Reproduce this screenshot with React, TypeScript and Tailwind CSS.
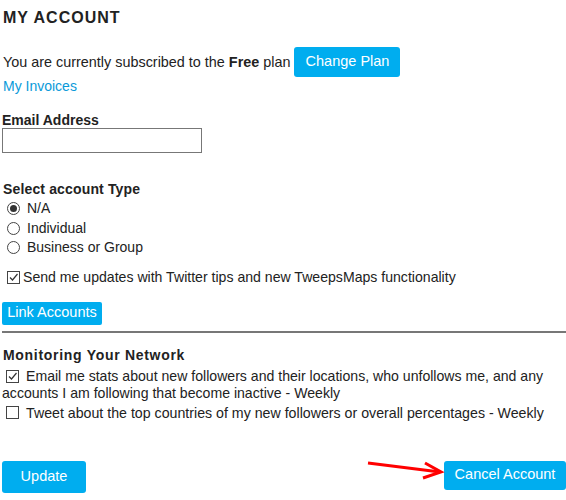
export default function App() {
  return (
    <div className="relative w-[566px] h-[500px] bg-white pl-[2px] text-[14px] text-[#222] font-['Liberation_Sans',Arial,sans-serif]">
      <h1 className="pt-[9px] pl-[1px] text-[16px] leading-[18px] font-bold tracking-[1px]">MY ACCOUNT</h1>

      <div className="mt-[20px] flex items-center gap-[4px] pl-[1px]">
        <span className="text-[14.4px] leading-[18px]">
          You are currently subscribed to the <b>Free</b> plan
        </span>
        <button className="h-[30px] w-[106px] rounded-[3px] bg-[#00adef] text-[14.5px] text-white">Change Plan</button>
      </div>
      <a className="block pl-[1px] leading-[18px] text-[#0a9ad9]" href="#">My Invoices</a>

      <label className="mt-[17px] block leading-[16px] font-bold">Email Address</label>
      <input className="block h-[25px] w-[200px] border border-[#777] bg-white" />

      <div className="mt-[27px] pl-[1px] leading-[18px] font-bold tracking-[0.15px]">Select account Type</div>
      <div className="mt-[1px] flex flex-col">
        {['N/A', 'Individual', 'Business or Group'].map((t, i) => (
          <label key={t} className="flex h-[19.5px] items-center">
            <span className="ml-[5px] mr-[7px] flex h-[13px] w-[13px] items-center justify-center rounded-full border border-[#444] bg-white">
              {i === 0 && <span className="h-[7px] w-[7px] rounded-full bg-[#333]" />}
            </span>
            {t}
          </label>
        ))}
      </div>

      <label className="mt-[11px] flex h-[18px] items-center text-[14.1px]">
        <Check on className="ml-[5px] mr-[3px]" />
        Send me updates with Twitter tips and new TweepsMaps functionality
      </label>

      <button className="mt-[15px] block h-[23px] w-[100px] rounded-[2px] bg-[#00adef] text-[14.5px] text-white">Link Accounts</button>

      <hr className="mt-[6px] border-0 border-t-2 border-[#777]" />

      <div className="mt-[13px] pl-[1px] leading-[18px] font-bold tracking-[0.7px]">Monitoring Your Network</div>
      <p className="mt-[4px] pr-[8px] text-[14.1px] leading-[17px]">
        <Check on className="ml-[4px] mr-[7px] inline-flex align-[-1px]" />
        Email me stats about new followers and their locations, who unfollows me, and any accounts I am following that become inactive - Weekly
      </p>
      <p className="mt-[3px] text-[14.2px] leading-[17px]">
        <Check className="ml-[4px] mr-[7px] inline-flex align-[-1px]" />
        Tweet about the top countries of my new followers or overall percentages - Weekly
      </p>

      <div className="mt-[39px] flex items-start justify-between">
        <button className="h-[32px] w-[84px] rounded-[3px] bg-[#00adef] text-[14.5px] text-white">Update</button>
        <button className="h-[29px] w-[122px] rounded-[3px] bg-[#00adef] text-[14.5px] text-white">Cancel Account</button>
      </div>

      <svg className="absolute left-[360px] top-[455px]" width="90" height="32" viewBox="0 0 90 32">
        <path d="M8 8 L80 17" stroke="#f00" strokeWidth="3" fill="none" />
        <path d="M65 8 L81 17 L63 23" stroke="#f00" strokeWidth="3" fill="none" />
      </svg>
    </div>
  );
}

function Check({ on, className = '' }: { on?: boolean; className?: string }) {
  return (
    <span className={`h-[13px] w-[13px] items-center justify-center border border-[#444] bg-white ${className} ${className.includes('inline-flex') ? '' : 'flex'}`}>
      {on && (
        <svg width="11" height="11" viewBox="0 0 11 11">
          <path d="M2 5.5 L4.5 8 L9.5 2" stroke="#333" strokeWidth="1.2" fill="none" />
        </svg>
      )}
    </span>
  );
}
